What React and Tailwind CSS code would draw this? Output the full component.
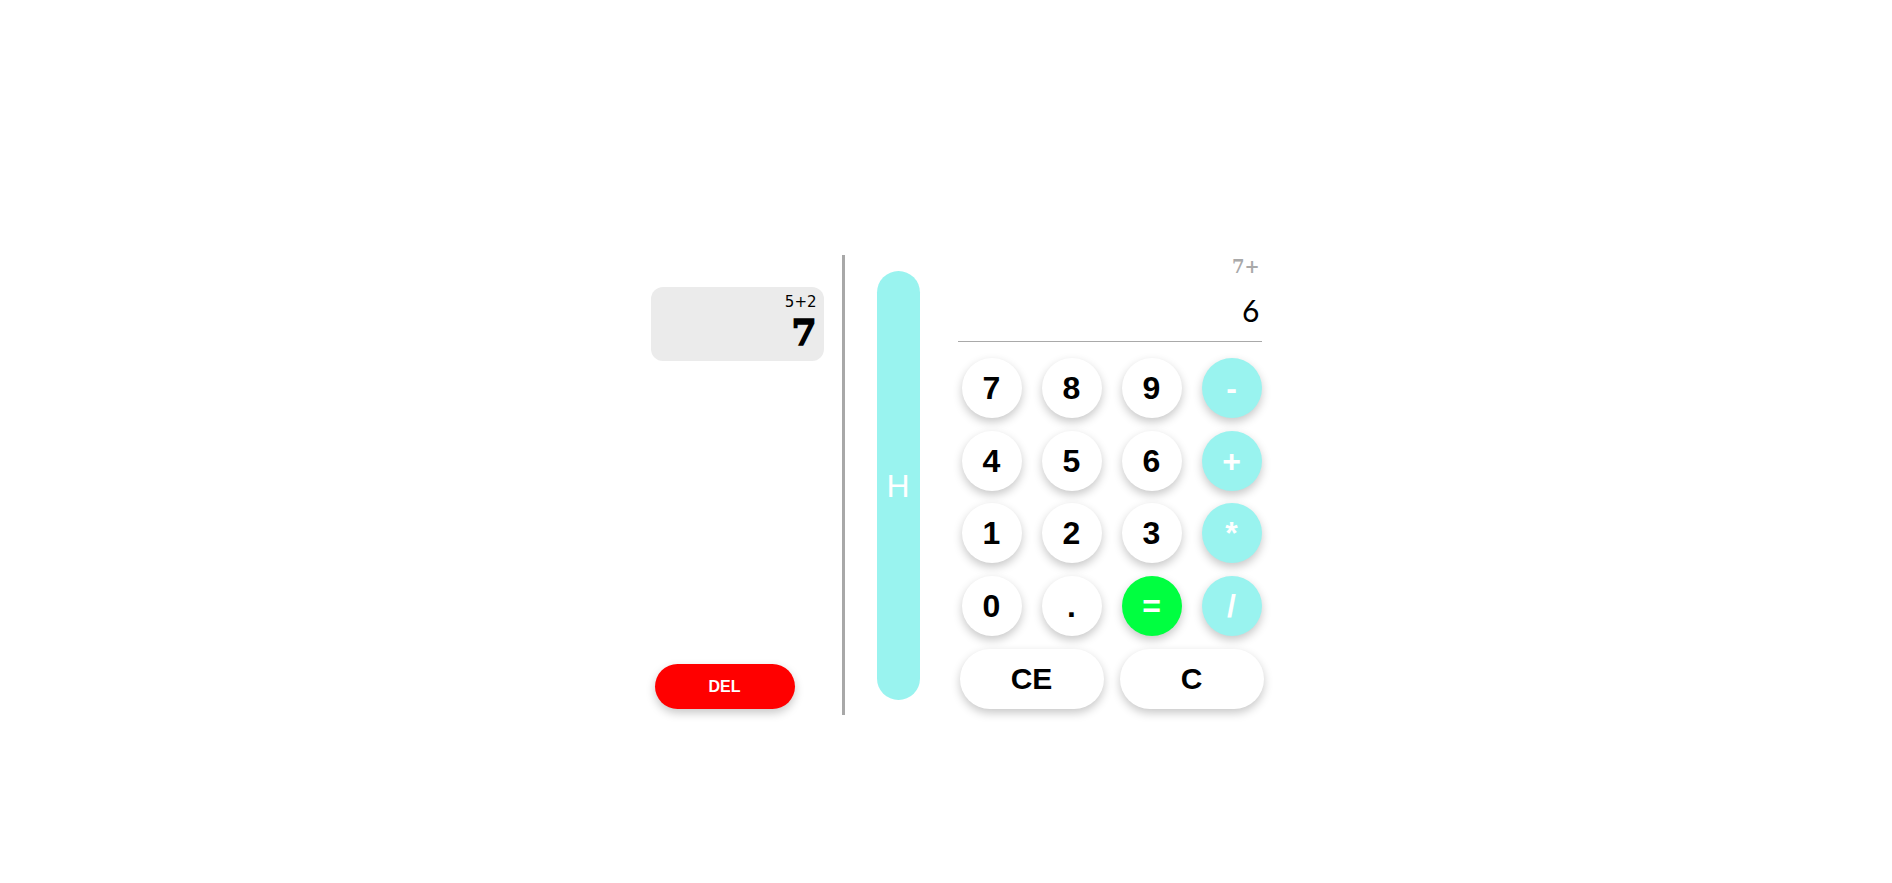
import React from "react";

const sh = "shadow-[0_4px_10px_rgba(0,0,0,0.22)]";

function Circle({ label, kind }) {
  const color =
    kind === "op"
      ? "bg-[#99f3ef] text-white"
      : kind === "eq"
      ? "bg-[#00ff40] text-white"
      : "bg-white text-black";
  return (
    <button
      className={`w-[60px] h-[60px] rounded-full flex items-center justify-center font-bold text-[32px] leading-none ${color} ${sh}`}
      style={{ fontFamily: '"Liberation Sans", Arial, sans-serif' }}
    >
      {label}
    </button>
  );
}

export default function App() {
  const rows = [
    [["7"], ["8"], ["9"], ["-", "op"]],
    [["4"], ["5"], ["6"], ["+", "op"]],
    [["1"], ["2"], ["3"], ["*", "op"]],
    [["0"], ["."], ["=", "eq"], ["/", "op"]],
  ];
  return (
    <div className="w-full min-h-[883px] bg-white flex justify-center pt-[255px]">
      <div className="flex flex-row ml-[22px]">
        {/* history */}
        <div className="w-[191px] h-[460px] flex flex-col justify-between pt-[32px] pb-[6px]">
          <div className="w-[173px] h-[74px] rounded-[12px] bg-[#ebebeb] flex flex-col items-end pr-[7px] pt-[7px]">
            <div
              className="text-[15px] leading-[16px] text-black"
              style={{ fontFamily: '"DejaVu Sans", sans-serif' }}
            >
              5+2
            </div>
            <div
              className="text-[36px] leading-[40px] font-black text-black mt-[2px] [-webkit-text-stroke:1.5px_black]"
              style={{ fontFamily: '"DejaVu Serif", serif' }}
            >
              7
            </div>
          </div>
          <button
            className={`ml-[4px] w-[140px] h-[45px] rounded-full bg-[#ff0000] text-white font-bold text-[16px] ${sh}`}
            style={{ fontFamily: '"Liberation Sans", Arial, sans-serif' }}
          >
            DEL
          </button>
        </div>
        {/* divider */}
        <div className="w-[3px] h-[460px] bg-[#a8a8a8]" />
        {/* H bar */}
        <div className="pl-[32px] pt-[16px]">
          <div
            className="w-[43px] h-[429px] rounded-full bg-[#99f3ef] flex items-center justify-center text-white text-[32px]"
            style={{ fontFamily: '"Liberation Sans", Arial, sans-serif' }}
          >
            H
          </div>
        </div>
        {/* calculator */}
        <div className="pl-[38px] w-[344px]">
          <div className="w-[304px] border-b border-[#a9a9a9] flex flex-col items-end pr-[2px]">
            <div
              className="text-[18px] leading-[22px] text-[#a9a9a9] font-bold mt-[1px]"
              style={{ fontFamily: '"DejaVu Serif", serif' }}
            >
              7+
            </div>
            <div
              className="text-[30px] leading-[36px] text-black mt-[14px] mb-[13px]"
              style={{ fontFamily: 'Lato, "Open Sans", sans-serif' }}
            >
              6
            </div>
          </div>
          <div className="pt-[16px] pl-[4px] flex flex-col gap-[12.67px]">
            {rows.map((r, i) => (
              <div key={i} className="flex gap-[20px]">
                {r.map(([l, k]) => (
                  <Circle key={l} label={l} kind={k} />
                ))}
              </div>
            ))}
          </div>
          <div className="pt-[13px] pl-[2px] flex gap-[16px]">
            {["CE", "C"].map((l) => (
              <button
                key={l}
                className={`w-[144px] h-[60px] rounded-full bg-white text-black font-bold text-[30px] ${sh}`}
                style={{ fontFamily: '"Liberation Sans", Arial, sans-serif' }}
              >
                {l}
              </button>
            ))}
          </div>
        </div>
      </div>
    </div>
  );
}
